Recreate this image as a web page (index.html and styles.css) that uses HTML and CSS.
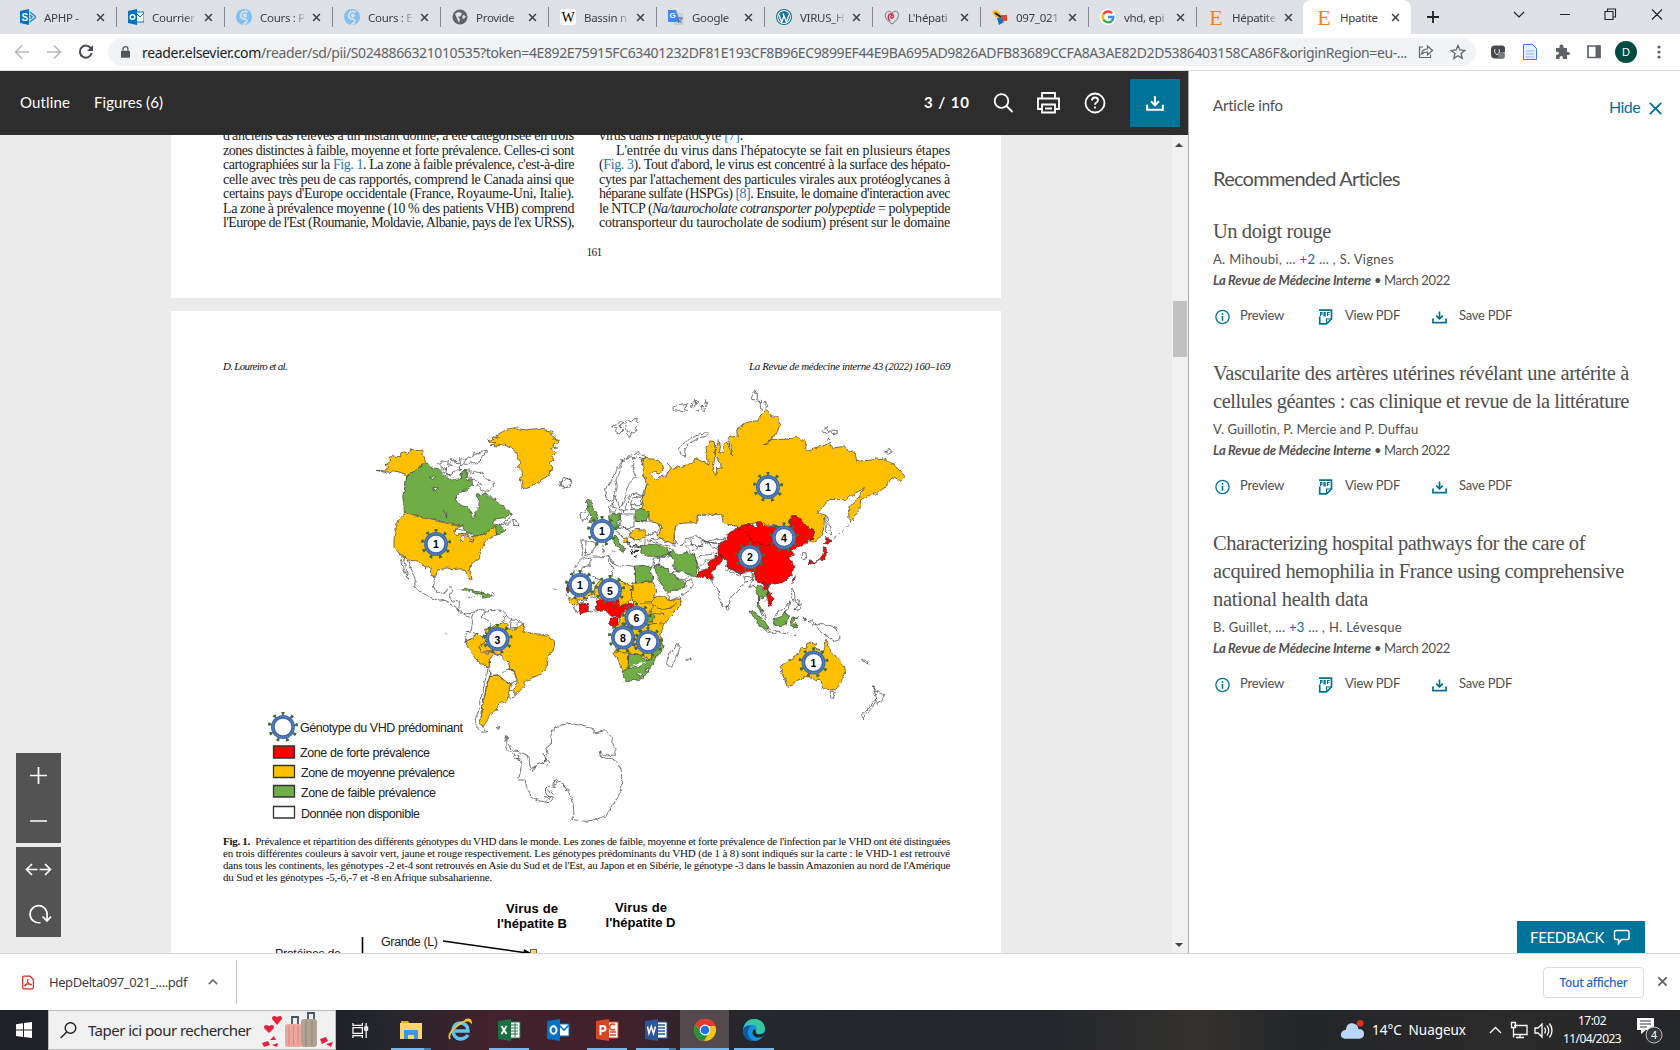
FILE: index.html
```html
<!DOCTYPE html>
<html lang="fr">
<head>
<meta charset="utf-8">
<title>Hpatite</title>
<link rel="stylesheet" href="styles.css">
</head>
<body>
<svg class="defs" aria-hidden="true">
  <defs>
    <filter id="coast" x="-5%" y="-5%" width="110%" height="110%" color-interpolation-filters="sRGB"><feTurbulence type="fractalNoise" baseFrequency=".07" numOctaves="2" seed="4" result="n"/><feDisplacementMap in="SourceGraphic" in2="n" scale="13" xChannelSelector="R" yChannelSelector="G"/></filter>
    <symbol id="i-x" viewBox="0 0 10 10"><path d="M1.2 1.2l7.6 7.6M8.8 1.2L1.2 8.8" fill="none" stroke="currentColor" stroke-width="1.7"/></symbol>
    <symbol id="i-moodle" viewBox="0 0 16 16"><circle cx="8" cy="8" r="8" fill="#7fc1f4"/><path d="M12 3Q6 1 5 5.500T9 10q3 1 1 3.500L7 16" fill="none" stroke="#dee1e6" stroke-width="1.800"/><circle cx="9" cy="6.500" r="2" fill="#dee1e6"/></symbol>
    <symbol id="i-down" viewBox="0 0 16 14"><path d="M8 1v8M4.500 5.500L8 9l3.500-3.500M1 8.500V13h14V8.500" fill="none" stroke="currentColor" stroke-width="1.800"/></symbol>
    <symbol id="i-info" viewBox="0 0 14 14"><circle cx="7" cy="7" r="6.200" fill="none" stroke="currentColor" stroke-width="1.200"/><path d="M7 6v4.500M7 3.300v1.500" stroke="currentColor" stroke-width="1.500"/></symbol>
    <symbol id="i-pdf" viewBox="0 0 14 16"><path d="M1.200 7.500v7.300H8l5-4.800V1.200H.5" fill="none" stroke="currentColor" stroke-width="1.700"/><path d="M8 14.500V10h5M2 7V3.500h1.500v1.700H2M5.500 3.500V7h1.200V3.500zM9 7V3.500h2.300M9 5.200h1.800" fill="none" stroke="currentColor" stroke-width="1.100"/></symbol>
    <symbol id="badge" viewBox="-48 -48 96 96" overflow="visible">
      <circle r="39" fill="none" stroke="#4d7a35" stroke-width="10" stroke-dasharray="6 21.230" transform="rotate(-94)"/>
      <circle r="42" fill="none" stroke="#3f6b2c" stroke-width="6" stroke-dasharray="9 20.320" transform="rotate(-96)"/>
      <circle r="30.500" fill="#fff" stroke="#3d68ac" stroke-width="11"/>
      <circle r="31" fill="none" stroke="#8aaede" stroke-width="3" stroke-dasharray="3 3.500"/>
    </symbol>
  </defs>
</svg>

<div class="tabs">
  <div class="tab"><svg viewBox="0 0 16 16"><path d="M0 2l9-2v16l-9-2z" fill="#0072c6"/><path d="M10 3l6 5-6 5M10 6l2 2-2 2" fill="none" stroke="#2a8dd4" stroke-width="1.500"/><text x="1.500" y="11.500" class="fav" fill="#fff" font-size="10">S</text></svg><span>APHP - </span><svg class="x"><use href="#i-x"/></svg></div>
  <div class="tab"><svg viewBox="0 0 16 16"><path d="M8 3h8v10H8z" fill="#fff" stroke="#0072c6"/><path d="M8 4l4 4 4-4" fill="none" stroke="#0072c6"/><path d="M0 2l9-2v16l-9-2z" fill="#0072c6"/><circle cx="4.500" cy="8" r="2.300" fill="none" stroke="#fff" stroke-width="1.500"/></svg><span>Courrier</span><svg class="x"><use href="#i-x"/></svg></div>
  <div class="tab"><svg><use href="#i-moodle"/></svg><span>Cours : P</span><svg class="x"><use href="#i-x"/></svg></div>
  <div class="tab"><svg><use href="#i-moodle"/></svg><span>Cours : E</span><svg class="x"><use href="#i-x"/></svg></div>
  <div class="tab"><svg viewBox="0 0 16 16"><circle cx="8" cy="8" r="7.500" fill="#5f6368"/><path d="M3 5l3-2 4 1-1 3-3 1 2 2-1 4M11 6l3 1-2 3-2-1z" fill="#dee1e6"/></svg><span>Provide</span><svg class="x"><use href="#i-x"/></svg></div>
  <div class="tab"><svg viewBox="0 0 16 16"><rect width="16" height="16" rx="3" fill="#fff"/><text x="8" y="13" text-anchor="middle" class="fav-serif" font-size="14">W</text></svg><span>Bassin n</span><svg class="x"><use href="#i-x"/></svg></div>
  <div class="tab"><svg viewBox="0 0 16 16"><rect x="6" y="4" width="9.500" height="12" rx="1" fill="#ccd0d6"/><path d="M0 1h8l4 12H1q-1 0-1-1z" fill="#4285f4"/><text x="1.500" y="9" class="fav" fill="#fff" font-size="8">G</text><path d="M9 9h6M12 8v2M14 9q-1 3-4 5M10 10q2 3 4 4" stroke="#607080" stroke-width=".9" fill="none"/></svg><span>Google</span><svg class="x"><use href="#i-x"/></svg></div>
  <div class="tab"><svg viewBox="0 0 16 16"><circle cx="8" cy="8" r="7.500" fill="#fff" stroke="#21759b" stroke-width="1.200"/><circle cx="8" cy="8" r="6" fill="#21759b"/><path d="M2.500 5l3.200 8L8 7l2.500 6 3-8.500M7 4.500l3.500 8.500" stroke="#fff" stroke-width="1.300" fill="none"/></svg><span>VIRUS_H</span><svg class="x"><use href="#i-x"/></svg></div>
  <div class="tab"><svg viewBox="0 0 16 16"><path d="M8 15C2 11 0 7 2 4s5-2 6 1c1-3 5-4 6-1s0 7-6 11z" fill="none" stroke="#777" stroke-width="1"/><path d="M6 12C3 9 4 5 7 5S10 8 8.500 9 6 8 8 6" fill="none" stroke="#e0224e" stroke-width="1.400"/></svg><span>L'hépati</span><svg class="x"><use href="#i-x"/></svg></div>
  <div class="tab"><svg viewBox="0 0 16 16"><path d="M0 3q3-3 6-1t3 5l-5 2z" fill="#f5b914"/><path d="M9 6h6v6h-5z" fill="#e5452d"/><path d="M5 9l4-1 3 5-5 3z" fill="#1675b8"/><path d="M3 4l6 4" stroke="#222" stroke-width="2"/></svg><span>097_021</span><svg class="x"><use href="#i-x"/></svg></div>
  <div class="tab"><svg viewBox="0 0 16 16"><circle cx="8" cy="8" r="8" fill="#fff"/><g fill="none" stroke-width="2.400"><path d="M12 4.200A5.300 5.300 0 0 0 3.400 5.300" stroke="#ea4335"/><path d="M3.400 5.300a5.300 5.300 0 0 0 0 5.400" stroke="#fbbc05"/><path d="M3.400 10.700a5.300 5.300 0 0 0 8.400 1.100" stroke="#34a853"/><path d="M11.800 11.800A5.300 5.300 0 0 0 13.300 8H8" stroke="#4285f4"/></g></svg><span>vhd, epi</span><svg class="x"><use href="#i-x"/></svg></div>
  <div class="tab"><svg viewBox="0 0 16 16"><text x="8" y="15.500" text-anchor="middle" class="fav-serif" font-size="22" fill="#f58220">E</text></svg><span>Hépatite</span><svg class="x"><use href="#i-x"/></svg></div>
  <div class="tab active"><svg viewBox="0 0 16 16"><text x="8" y="15.500" text-anchor="middle" class="fav-serif" font-size="22" fill="#f58220">E</text></svg><span>Hpatite</span><svg class="x"><use href="#i-x"/></svg></div>
  <svg class="winctl" viewBox="1417 0 263 34" fill="none" stroke="#222"><path d="M1427 17h12M1433 11v12" stroke-width="1.800"/><path d="M1514 12l5 5 5-5M1560 14.500h10M1605 11.500h8v8h-8zM1607.500 11.500v-2.500h8v8h-2.500M1652 9.500l10 10M1662 9.500l-10 10" stroke-width="1.100"/></svg>
</div>

<div class="toolbar">
  <svg class="nav" viewBox="0 34 108 36" fill="none" stroke-width="1.700"><path d="M29 52H16M22 45.500L15.500 52l6.500 6.500M47 52h13M54 45.500l6.500 6.500-6.500 6.500" stroke="#b8babd"/><path d="M91 48.500a6 6 0 1 0 .7 4.500" stroke="#4a4d51" stroke-width="2"/><path d="M93 45v6h-6z" fill="#4a4d51"/></svg>
  <div class="omni">
    <svg class="lock" viewBox="0 0 10 13"><rect y="5" width="10" height="8" rx="1" fill="#54575b"/><path d="M2.300 5V3.300a2.700 2.700 0 0 1 5.400 0V5" fill="none" stroke="#54575b" stroke-width="1.400"/></svg>
    <div class="url"><span class="host" data-w="119">reader.elsevier.com</span><span data-w="1146">/reader/sd/pii/S0248866321010535?token=4E892E75915FC63401232DF81E193CF8B96EC9899EF44E9BA695AD9826ADFB83689CCFA8A3AE82D2D5386403158CA86F&amp;originRegion=eu-...</span></div>
  </div>
  <svg class="ext" viewBox="1412 34 268 36" fill="none" stroke="#5f6368">
    <path d="M1423 47h-3.500v10.500h11v-3M1421.500 54q1-5 6-5v-3l5 4.500-5 4.500v-3q-4 0-6 2z" stroke-width="1.200"/>
    <path d="M1458 45.500l2 4.500 4.800.4-3.700 3.200 1.200 4.700-4.300-2.600-4.200 2.600 1.200-4.700-3.700-3.200 4.800-.4z" stroke-width="1.300"/>
    <path d="M1491 49q0-3.500 4-3.500h7q3 0 3 3v4h-4v6h-6q-4 0-4-4z" fill="#45484c" stroke="none"/><circle cx="1501.500" cy="55.500" r="3.500" fill="#777a7e" stroke="none"/><path d="M1495 49q-2 3 2 6M1499 49q2 3-2 6" stroke="#ddd"/>
    <path d="M1523.500 44.500h9l4 4v11h-13z" fill="#e4f0ff" stroke="#3b7ddd"/><path d="M1526 51h8M1526 54h8M1526 57h8" stroke="#8bb5ef"/>
    <path d="M1556 48h3.500q-.5-3.500 2-3.500t2 3.500h3.500v4q3-.5 3 1.500t-3 1.500v4h-4q0-3-1.800-3t-1.700 3H1556v-4q3 0 3-1.700t-3-1.600z" fill="#5f6368" stroke="none"/>
    <path d="M1588 46h12v11.500h-12z" stroke-width="1.700"/><path d="M1596 46h4v11.500h-4z" fill="#5f6368"/>
    <circle cx="1626" cy="52" r="11" fill="#004d40" stroke="none"/><text x="1626" y="56" text-anchor="middle" class="ava">D</text>
    <g fill="#5f6368" stroke="none"><circle cx="1659" cy="47" r="1.600"/><circle cx="1659" cy="52" r="1.600"/><circle cx="1659" cy="57" r="1.600"/></g>
  </svg>
</div>

<div class="content">
  <div class="reader">
    <header class="rhead">
      <span class="outline" data-w="50">Outline</span><span data-w="69">Figures (6)</span>
      <b class="count" data-w="46">3&nbsp;/&nbsp;10</b>
      <svg class="rico" viewBox="985 85 130 36" fill="none" stroke="#fff" stroke-width="1.800"><circle cx="1001.500" cy="101" r="6.800"/><path d="M1006.500 106l6 6"/><path d="M1042 98v-5h13v5M1041.500 109h-3.500V98.500h21V109h-3.500M1042 104.500h13v8h-13zM1045 108.500h7"/><circle cx="1095" cy="103" r="9.500"/><path d="M1092 100.500q0-3 3-3t3 2.700q0 1.500-1.500 2.300t-1.500 2.300M1095 106.500v2"/></svg>
      <div class="dl"><svg viewBox="0 0 16 14"><use href="#i-down"/></svg></div>
    </header>
    <div class="view">
      <div class="pages">
        <section class="page p1">
          <div class="cols">
            <div class="col">
              <p data-w="351">d'anciens cas relevés à un instant donné, a été catégorisée en trois</p>
              <p data-w="351">zones distinctes à faible, moyenne et forte prévalence. Celles-ci sont</p>
              <p data-w="351">cartographiées sur la <a>Fig. 1</a>. La zone à faible prévalence, c'est-à-dire</p>
              <p data-w="351">celle avec très peu de cas rapportés, comprend le Canada ainsi que</p>
              <p data-w="351">certains pays d'Europe occidentale (France, Royaume-Uni, Italie).</p>
              <p data-w="351">La zone à prévalence moyenne (10 % des patients VHB) comprend</p>
              <p data-w="351">l'Europe de l'Est (Roumanie, Moldavie, Albanie, pays de l'ex URSS),</p>
            </div>
            <div class="col">
              <p data-w="144">virus dans l'hépatocyte <a>[7]</a>.</p>
              <p class="ind" data-w="334">L'entrée du virus dans l'hépatocyte se fait en plusieurs étapes</p>
              <p data-w="351">(<a>Fig. 3</a>). Tout d'abord, le virus est concentré à la surface des hépato-</p>
              <p data-w="351">cytes par l'attachement des particules virales aux protéoglycanes à</p>
              <p data-w="351">héparane sulfate (HSPGs) <a>[8]</a>. Ensuite, le domaine d'interaction avec</p>
              <p data-w="351">le NTCP (<i>Na/taurocholate cotransporter polypeptide</i> = polypeptide</p>
              <p data-w="351">cotransporteur du taurocholate de sodium) présent sur le domaine</p>
            </div>
          </div>
          <div class="folio"><span data-w="15">161</span></div>
        </section>
        <section class="page p2">
          <div class="phead"><i data-w="64">D. Loureiro et al.</i><i data-w="201">La Revue de médecine interne 43 (2022) 160–169</i></div>
          <svg class="map" viewBox="171 380 830 455">
            <!-- Americas -->
            <g class="land" filter="url(#coast)" transform="translate(370 380) scale(.33333)">
              <path class="y" d="M18 271L50 273 56 260 48 254 66 240 56 232 72 228 92 230 92 218 104 216 116 222 122 206 136 212 158 210 160 226 167 248 110 290 104 282 88 276 70 272 58 280 40 276z"/>
              <path class="y" d="M110 290L112 308 118 330 110 346 104 330 108 310z"/>
              <path class="g" d="M110 290L167 248 178 258 190 264 206 266 222 284 232 290 244 300 272 296 270 282 288 268 290 298 306 300 308 316 290 330 276 332 262 342 256 360 272 374 292 382 304 400 306 412 316 410 314 394 326 380 328 362 318 346 348 340 364 356 378 358 390 372 404 382 424 402 400 414 372 418 368 432 384 434 408 450 388 464 372 458 376 444 356 460 318 468 285 452 274 436 103 400 102 376 98 350 106 320z"/>
              <path class="y" d="M103 400L188 421 274 438 256 450 262 460 286 462 296 470 320 468 350 460 364 446 376 442 380 462 360 474 344 486 338 502 328 520 330 532 304 552 298 566 307 598 298 598 286 572 270 566 248 570 232 564 206 570 196 590 184 586 178 560 162 562 148 544 112 540 88 520 72 502 72 476 78 442 90 412z"/>
              <path class="w" d="M250 456L266 448 288 452 292 460 276 460 260 464zM272 484Q270 466 282 466L280 484zM292 460Q310 462 306 476L298 472zM298 484L320 474 306 484zM178 292L198 290 188 298zM186 322L206 324 194 332zM224 392L230 400 230 414z"/>
              <path class="y" d="M350 182L372 178 366 170 385 174 378 166 398 155 410 147 440 143 465 150 500 146 528 150 552 155 540 162 556 170 548 176 568 180 560 190 548 196 560 204 545 208 556 218 546 228 552 240 540 248 552 270 538 272 540 285 520 296 500 308 485 320 462 328 455 318 458 304 448 295 458 288 455 268 440 262 452 250 442 236 440 215 425 205 400 195 385 198 360 196 378 190z"/>
              <path class="l" d="M565 312l10-10 6 6 6-12 14 2 6 14-8 8-14 4-12-8zM206 250l12-8 14 4-2 8 18 2-12-12 8-8 12 4 2 10 14 0-4-14 16 8 12-14 6 6 14-14 18-6 6-6 12 2-12 16-10 16-18 8-8-6-14 6-10-4-12 12 2 12-18 2-8 12-14-2 2-14-16-4-4-10zM290 270l10 0 0 12 14-8 16 4 12 8 14 14 14 8 0 14-10 10-14 2-16-8-10-10 14 0-6-10-20-10-16-4zM424 402L414 420 388 436 412 432 428 418 432 436 446 438 444 426 430 416M268 270l10-2-4 28M240 235l10 6M260 262l12 6M316 214l-8 12M212 268l30 20 8-14M222 278l18-20"/>
              <path class="l" d="M88 520L96 545 100 568 116 598 108 572 102 545 100 532 112 540 126 572 136 600 134 622 160 640 200 662 222 658 240 672 262 686 275 704 300 712M195 590L190 615 196 632 212 640 230 636 238 622 248 628 236 648 244 662 268 666 266 690 286 702 305 700M368 640l6 2M290 652l10 0M550 626l10 5M224 757l6 6"/>
              <path class="g" d="M272 630l16-6 16 6 12 4 16 2 6 6-22 0-8-8-16-2-14 2zM330 646l10-6 14 2 16 8-16 2-14 2zM304 652l10 0"/>
              <path class="w" d="M305 712L310 700 330 688 342 686 342 700 362 692 388 690 404 696 410 708 428 720 446 722 462 734 456 744 440 742 410 745 402 728 382 738 362 746 348 748 346 776 336 768 322 764 302 778 286 786 288 760 304 748 308 728zM335 700L334 714 350 718 362 728 366 748M404 708l-4 20M425 715l-4 26M445 722l-2 18M290 755l24 4 6 6"/>
              <path class="y" d="M284 786L302 780 318 764 326 762 336 774 350 772 346 788 332 796 334 812 350 820 368 812 372 826 358 838 360 850 354 862 332 850 314 834 304 812z"/>
              <path class="y" d="M348 748L362 746 382 736 402 728 412 734 410 745 428 748 446 742 458 732 466 745 460 758 472 752 484 760 506 762 530 768 552 778 554 792 550 808 536 826 530 845 528 865 515 882 495 890 480 898 466 905 464 918 450 932 436 946 424 940 438 918 442 900 436 885 430 872 418 864 415 848 398 832 380 820 365 815 334 816 328 798 346 786z"/>
              <path class="w" d="M358 838L374 820 396 830 416 848 420 868 434 876 438 900 422 914 410 906 396 894 382 884 360 888zM396 880L410 868 432 872M412 934L424 930 438 944 424 956 412 950z"/>
              <path class="y" d="M360 886L385 886 395 895 410 908 424 914 418 932 412 955 410 965 390 970 382 978 378 990 362 1000 355 1015 348 1030 340 1042 328 1032 334 1015 336 990 340 962 345 940 350 915z"/>
              <path class="w" d="M350 862L357 864 360 886 350 915 344 944 338 970 336 1000 332 1016 328 1036 340 1044 350 1056 336 1056 318 1036 316 1016 328 990 330 960 340 930 348 890zM378 1042l12-2-8 6zM404 1068l10 4-8 6"/>
            </g>
            <!-- Europe, Middle East and Africa -->
            <g class="land" filter="url(#coast)" transform="translate(560 380) scale(.33333)">
              <path class="l" d="M155 140l16-6 12-12 8 10-12 6 12 10-14 14-12-10 8-8zM195 140l6-20 14 6 6-8 16-6-6 14 8 8-14 10 4 10-14 2-4 14-10-8 8-10-10-2zM338 82l14-6 12 0 16-4-8 12 12 6-16 6-14-6-14 0zM390 80l10-12 8 2-8 14zM405 58l10 8-6 8zM422 78l12 4-6 12zM436 62l8 6-6 10zM412 88l4 6-8-2M358 208L368 192 388 178 418 162 444 158 444 166 418 174 390 188 376 204 374 214 378 228 364 226zM0 308l8-6 2-10 20 6 4 12-14 14-16-6z"/>
              <path class="w" d="M134 330L148 310 160 292 170 268 182 248 196 234 212 226 228 216 244 224 258 230 252 240 258 270 250 290 262 310 248 348 226 340 210 344 200 372 192 392 180 388 172 360 162 356 152 364 138 356zM180 242l14 2M175 270L192 236 214 230 222 236 216 260 228 290 208 310 194 340 200 350 182 380M222 236L242 232 254 260M162 356L172 320 168 300 182 272"/>
              <path class="w" d="M148 382l10-14 2 14 10 4-6 10-14 0zM182 402L196 390 216 388 212 364 232 348 246 350 244 370 248 386 236 390 262 392 268 424 296 432 302 450 282 456 276 466 264 462 256 476 254 494 236 500 210 496 196 480 176 460 160 440 180 432zM184 402L222 402 222 440 200 448 176 428M222 420L262 424M216 388L236 390M212 374l34 0M170 440l34 8 10 12M206 470l36 14M176 456l24 30 8 18M192 470l16 24"/>
              <path class="w" d="M62 482L96 484 110 492 100 508 98 520 78 526 66 528 68 508zM78 484l-2 40M60 402l16-10 8 6-2 18-18 8-2-12zM130 505l2 8-6 4M128 495l2 6M154 512l12 2"/>
              <path class="g" d="M78 362L92 356 96 372 98 384 108 398 114 412 110 424 96 424 86 428 96 414 88 398 82 386 84 374zM146 410L158 400 178 402 182 420 170 428 174 442 150 442zM224 398L236 386 262 384 268 404 258 422 226 422zM156 474L170 468 176 484 188 498 198 506 192 508 188 522 182 508 168 496zM96 430L130 418 152 434 158 474 110 482z"/>
              <path class="y" d="M212 460L226 448 248 450 258 460 254 474 232 480 212 472zM190 478l10-6 4 12-10 4z"/>
              <path class="k" d="M206 498L216 502 226 496 236 500M210 508L222 512 216 522 232 516 228 506M222 530L234 526 M224 516L238 510M212 516L218 526"/>
              <path class="g" d="M240 498L262 492 282 494 310 498 326 502 328 522 298 530 260 528 244 520zM325 520L340 514 356 522 384 516 404 526 412 550 410 572 414 590 392 588 370 576 350 572 336 550zM226 558L248 556 276 560 270 572 278 590 276 606 226 608zM284 558L300 556 322 568 340 578 350 596 364 602 378 612 370 624 342 630 328 640 312 626 298 602 288 578z"/>
              <path class="w" d="M40 580L46 560 66 538 88 532 128 530 152 526 158 552 182 560 204 556 226 560 226 612 212 620 176 600 152 606 120 600 94 586 62 584zM62 578L66 562 92 556 94 536M150 530L148 552 158 564 156 604M20 630l20 0 10 16-14 14-18-12zM38 672L56 666 60 688 48 698zM70 668L88 650 104 652 110 668 104 690 86 696 76 670z"/>
              <path class="w" d="M278 556L284 534 306 530 334 528 344 550 336 556 350 574 336 580 318 566 298 556zM300 530L296 556M320 640L374 622 378 602 396 600 400 614 388 632 356 652 330 662zM352 596L378 600 386 588M380 502L374 496 400 494 424 500 432 484 476 490 476 512 466 530 480 536 452 556 440 570 416 574 412 548 404 526zM340 460L346 430 388 426 412 424 412 406 440 406 456 400 486 402 506 430 538 440 504 460 500 480 470 492 440 486 408 468 382 476 370 492 354 494 346 480zM388 474L396 496 430 500M440 486l30-10 28 0M264 482L296 492 326 498 340 510M310 488l20-6 14 18M286 456L304 470 290 480 270 478"/>
              <path class="r" d="M24 612l14-6 0 24-16 0zM58 672l28-2-2 24-24 8zM108 668L122 656 150 664 178 658 178 676 206 672 222 668 222 680 204 688 186 698 180 712 160 710 146 698 128 692 108 696zM150 714L174 714 174 732 162 744 148 730z"/>
              <path class="y" d="M52 600L96 622 102 642 84 652 70 662 48 658 70 620zM120 602L180 602 214 618 216 654 206 668 178 678 176 656 116 654 104 646 104 620zM26 654l20 0 12 16-16 8-14-14zM218 610L278 606 290 630 280 650 292 650 308 648 330 662 362 656 362 676 338 700 316 726 306 748 300 780 306 800 290 818 268 840 240 824 204 818 208 870 190 876 180 850 162 820 170 790 162 762 158 742 178 730 182 706 206 688 222 680 220 660 214 650z"/>
              <path class="l" d="M214 618L218 652M286 646L276 670 292 684 318 690 350 672M280 672L270 700 280 730 316 732M180 742L278 732M204 780l20 20 14-20M164 816L230 822M216 654L232 670 278 668M278 700l38 4"/>
              <path class="g" d="M262 708l14-6 8 10-6 12-14 4zM186 876L204 864 206 824 236 822 250 834 266 844 280 820 276 800 300 796 306 782 312 798 306 816 286 830 282 850 272 858 262 880 246 896 218 902 196 906zM204 862L238 860 264 842"/>
              <path class="w" d="M234 882l10-6 4 8-10 6zM256 868l6-4 2 8-6 4zM320 850L326 820 342 808 354 790 360 806 348 834 336 858 324 858z"/>
              <path class="l" d="M378 838l6 2M388 836l6 2"/>
            </g>
            <!-- Russia, Asia and Oceania -->
            <g class="land" filter="url(#coast)" transform="translate(680 380) scale(.33333)">
              <path class="y" d="M-114 232L-95 236 -75 238 -52 252 -48 270 -60 282 -80 275 -92 282 -70 300 -62 290 -42 288 -30 268 -38 250 -22 268 -8 262 18 255 40 248 44 235 58 240 80 248 86 256 78 205 90 182 102 185 106 210 102 250 96 268 108 286 110 262 130 264 116 246 104 214 115 182 122 200 118 214 134 218 130 196 140 186 150 205 158 228 154 204 144 184 146 172 172 168 170 150 196 130 212 124 238 122 240 108 256 92 268 104 294 112 300 135 288 164 252 196 276 178 320 178 352 172 376 184 378 206 394 214 398 204 430 198 446 188 460 204 488 200 526 220 530 244 576 240 582 234 606 236 640 252 674 288 662 302 634 294 620 318 592 340 562 348 542 360 540 388 508 430 505 385 530 358 550 326 524 340 500 360 450 358 410 398 434 405 432 440 424 466 402 486 388 486 404 456 368 436 350 408 330 420 328 440 300 440 268 436 240 425 180 440 130 430 125 405 80 402 52 406 50 428 0 430 -14 440 -18 470 -14 492 -40 485 -66 470 -54 438 -90 420 -94 395 -114 385 -112 350 -98 310 -106 290 -110 270z"/>
              <path class="r" d="M115 500L130 484 142 480 144 460 166 450 180 436 208 434 230 440 230 422 242 422 250 434 276 440 326 440 330 426 334 410 350 408 368 424 372 438 404 450 398 476 374 490 348 506 330 514 346 524 326 532 342 556 336 586 308 608 270 614 244 610 226 600 224 574 180 578 140 566 130 540 114 524z"/>
              <path class="r" d="M50 592L56 576 80 568 90 545 105 530 125 526 128 538 108 560 94 580 100 598 86 598 76 588zM245 610L268 615 262 632 282 655 278 670 262 678 268 660 256 636zM384 554L388 542 404 546 420 536 430 518 430 500 440 504 438 526 428 542 414 540 404 548zM430 490L440 484 440 472 456 484 444 492zM334 606l4-12 8-4-4 14-6 4z"/>
              <path class="l red" d="M172 442L200 460 222 488 262 496 310 486 332 462"/>
              <path class="w" d="M126 530L142 542 140 560 180 580 216 578 222 590 210 604 194 606 184 620 164 640 150 656 144 680 132 682 118 654 112 620 96 612 92 602 102 596 96 580 108 560 128 540zM140 572l8-6 34 16-4 6zM140 676l8 8-4 8-6-4zM196 606L194 590 216 590"/>
              <path class="l" d="M216 580L218 604 206 622 222 616 232 640 234 676M262 616L254 630 262 656 254 666"/>
              <path class="g" d="M226 628l6-12 8 0 6 10 16 2 4 14-14 4-4 10-12-4 0 20 6 12 10 14-6 0-14-18 2-26zM210 692l14 4 16 14 14 14 12 20-10 4-16-10-20-24zM282 716l18-4 10-10 8-8 8 16-8 12-2 14-12 4-20-4zM330 724l6-12 20-2-16 8 6 4-8 6 8 10-4 8-8-10zM370 710l6 4-4 10zM344 730l10 10-6 4z"/>
              <path class="l" d="M262 746l20 4 20 6-18 4-24-8zM304 758l18 4M328 766l20 0M240 692l14 10 6 14-14-10zM284 712l14-20 14-4 18-26-6 26-12 12M335 640l0-12 8 4 2 20-6 10-4-10zM346 658l12 4-2 14-10-8zM350 678l14-8 0 18-8 4-14-4zM384 724L398 722 406 736 424 730 470 742 480 770 476 780 464 784 440 768 424 758 410 740zM405 735l-12 4M364 518l14 0 2 16-8 6-8-6zM214 50l10-20 8 14 0 14 10 6-2 6-14-8-10 0zM240 70l14-6 10 14-8 12-14-4zM426 152l16-10 8 12-14 10zM452 150l20 2 0 8-16 4zM440 184l6-10 6 8M614 216l14-8 10 4-14 8zM438 402l6 14 6 30 2 20-12-6-2-30zM460 478l8-8M474 464l6-4M486 456l4-4M498 442l6-6M36 512l18-6 14-26 30 24 22-4M52 536l10-10 24-2 20-4M60 560l20-20 30 0"/>
              <path class="y" d="M300 860L318 846 338 838 346 824 358 818 364 804 378 806 380 792 390 786 410 790 406 804 428 818 434 806 438 778 444 788 450 812 462 824 476 838 490 856 494 876 484 904 474 924 454 930 430 926 424 908 414 896 408 904 396 892 376 890 354 900 338 914 322 922 314 898z"/>
              <path class="l" d="M450 934l16 0-6 22-8-6zM548 838l10 4 10 10-12-4zM580 920L590 936 614 944 606 962 592 970 588 950zM590 960L576 982 558 1000 548 1016 544 1004 566 986 582 964zM16 838l8 0M30 836l4 0"/>
            </g>
            <!-- Antarctica -->
            <g class="land" filter="url(#coast)" transform="translate(260 690) scale(.33333)">
              <path class="l" d="M735 152L742 136 740 160 755 180 775 185 790 190 800 195 808 215 812 235 835 225 855 215 862 195 858 175 875 160 872 135 885 112 905 105 930 100 975 110 1005 118 1000 130 1035 122 1058 140 1055 155 1065 180 1065 195 1035 198 1020 185 1025 205 1055 205 1075 220 1085 245 1085 290 1075 320 1055 350 1040 375 1010 388 975 394 935 388 942 370 938 330 925 305 905 280 885 270 880 290 865 290 855 300 865 320 880 325 868 338 835 332 812 318 800 290 795 270 775 270 782 240 785 215 765 205 758 190 740 178z"/>
              <path class="l" d="M760 190l18 8-8 12 14 0M762 204l14 6M810 240l18-10-10 16M855 205l14 14-6 8M850 190l10 20-14 10M880 270l12 10-16 10 12 4M852 320l20 4-10 10M860 290l20 24M1018 184l4 20M905 280l24 20-14 2"/>
            </g>
            <g stroke="#333" stroke-width="1.300"><path class="r" d="M273.500 746h21v12h-21z"/><path class="y" d="M273.500 765.500h21v12h-21z"/><path class="g" d="M273.500 785.500h21v11.500h-21z"/><path class="w" d="M273.500 806.500h21V818h-21z"/></g>
            <use href="#badge" x="267" y="711" width="32" height="32"/>
            <g class="leg"><text x="300" y="732" textLength="163">Génotype du VHD prédominant</text><text x="300" y="757" textLength="130">Zone de forte prévalence</text><text x="301" y="777" textLength="154">Zone de moyenne prévalence</text><text x="301" y="796.500" textLength="135">Zone de faible prévalence</text><text x="301" y="817.500" textLength="119">Donnée non disponible</text></g>
            <g class="num">
              <use href="#badge" x="420" y="528" width="32" height="32"/><text x="436" y="548">1</text>
              <use href="#badge" x="481.500" y="623" width="32" height="32"/><text x="497.500" y="643.500">3</text>
              <use href="#badge" x="586" y="515" width="32" height="32"/><text x="602" y="535">1</text>
              <use href="#badge" x="564" y="569" width="32" height="32"/><text x="580" y="589">1</text>
              <use href="#badge" x="594" y="574" width="32" height="32"/><text x="610" y="594.500">5</text>
              <use href="#badge" x="620.500" y="602" width="32" height="32"/><text x="636.500" y="622">6</text>
              <use href="#badge" x="607" y="621.500" width="32" height="32"/><text x="623" y="642">8</text>
              <use href="#badge" x="632" y="626" width="32" height="32"/><text x="648" y="646">7</text>
              <use href="#badge" x="752" y="471" width="32" height="32"/><text x="768" y="491">1</text>
              <use href="#badge" x="768" y="521.500" width="32" height="32"/><text x="784" y="542">4</text>
              <use href="#badge" x="734" y="541" width="32" height="32"/><text x="750" y="561">2</text>
              <use href="#badge" x="797.500" y="646.500" width="32" height="32"/><text x="813.500" y="666.500">1</text>
            </g>
          </svg>
          <div class="cap">
            <p data-w="727"><b>Fig. 1.</b>&ensp;Prévalence et répartition des différents génotypes du VHD dans le monde. Les zones de faible, moyenne et forte prévalence de l'infection par le VHD ont été distinguées</p>
            <p data-w="727">en trois différentes couleurs à savoir vert, jaune et rouge respectivement. Les génotypes prédominants du VHD (de 1 à 8) sont indiqués sur la carte : le VHD-1 est retrouvé</p>
            <p data-w="727">dans tous les continents, les génotypes -2 et-4 sont retrouvés en Asie du Sud et de l'Est, au Japon et en Sibérie, le génotype -3 dans le bassin Amazonien au nord de l'Amérique</p>
            <p data-w="269">du Sud et les génotypes -5,-6,-7 et -8 en Afrique subsaharienne.</p>
          </div>
          <svg class="fig2" viewBox="171 895 830 70">
            <g class="fh"><text x="506" y="912.500" textLength="52">Virus de</text><text x="497" y="927.500" textLength="70">l'hépatite B</text><text x="615" y="912" textLength="52">Virus de</text><text x="605.500" y="927" textLength="70">l'hépatite D</text></g>
            <g class="fl"><text x="381" y="945.500" textLength="57">Grande (L)</text><text x="275" y="957.500" textLength="66">Protéines de</text></g>
            <path d="M362.500 937v28M443 941l88 12.500" stroke="#000" stroke-width="1.600"/><path d="M524 949l8 4.500-9 2z"/><rect x="530.500" y="949.500" width="6" height="20" fill="#ffd54a" stroke="#666"/>
          </svg>
        </section>
      </div>
      <div class="scroll"><span class="thumb"></span></div>
      <div class="zoom">
        <div class="zbox"><svg viewBox="0 0 45 90" stroke="#fff" stroke-width="1.700"><path d="M14 22.500h17M22.500 14v17M14 68h17"/></svg></div>
        <div class="zbox"><svg viewBox="0 0 45 90" stroke="#fff" stroke-width="1.700" fill="none"><path d="M11 22.500h10.500M23.500 22.500h10.500M16 17l-5.500 5.500 5.500 5.500M29 17l5.500 5.500-5.500 5.500M24.500 75.500a8.500 8.500 0 1 1 6.500-7v5M26.500 69.500l4.500 4.500 4-4.500"/></svg></div>
      </div>
    </div>
  </div>
  <aside class="side">
    <div class="shead"><span data-w="70">Article info</span><div class="hide"><span data-w="31">Hide</span><svg viewBox="0 0 13 13"><path d="M.8.8l11.400 11.400M12.200.8L.8 12.200" stroke="#007398" stroke-width="1.800"/></svg></div></div>
    <h2><span data-w="187">Recommended Articles</span></h2>
    <article>
      <h3><span data-w="118">Un doigt rouge</span></h3>
      <div class="auth"><span data-w="181">A. Mihoubi, ... <a>+2</a> ... , S. Vignes</span></div>
      <div class="jour"><i data-w="158">La Revue de Médecine Interne</i><span data-w="76">• March 2022</span></div>
      <div class="acts"><svg><use href="#i-info"/></svg><span data-w="44">Preview</span><svg><use href="#i-pdf"/></svg><span data-w="55">View PDF</span><svg><use href="#i-down"/></svg><span data-w="53">Save PDF</span></div>
    </article>
    <article>
      <h3><span data-w="416">Vascularite des artères utérines révélant une artérite à</span><span data-w="416">cellules géantes : cas clinique et revue de la littérature</span></h3>
      <div class="auth"><span data-w="205">V. Guillotin, P. Mercie and P. Duffau</span></div>
      <div class="jour"><i data-w="158">La Revue de Médecine Interne</i><span data-w="76">• March 2022</span></div>
      <div class="acts"><svg><use href="#i-info"/></svg><span data-w="44">Preview</span><svg><use href="#i-pdf"/></svg><span data-w="55">View PDF</span><svg><use href="#i-down"/></svg><span data-w="53">Save PDF</span></div>
    </article>
    <article>
      <h3><span data-w="372">Characterizing hospital pathways for the care of</span><span data-w="411">acquired hemophilia in France using comprehensive</span><span data-w="155">national health data</span></h3>
      <div class="auth"><span data-w="189">B. Guillet, ... <a>+3</a> ... , H. Lévesque</span></div>
      <div class="jour"><i data-w="158">La Revue de Médecine Interne</i><span data-w="76">• March 2022</span></div>
      <div class="acts"><svg><use href="#i-info"/></svg><span data-w="44">Preview</span><svg><use href="#i-pdf"/></svg><span data-w="55">View PDF</span><svg><use href="#i-down"/></svg><span data-w="53">Save PDF</span></div>
    </article>
    <div class="feedback"><span data-w="74">FEEDBACK</span><svg viewBox="0 0 17 17"><path d="M3 1.500h11.500q1.500 0 1.500 1.500v6q0 1.500-1.500 1.500H8.500l-3 4v-4H3Q1.500 10.500 1.500 9V3Q1.500 1.500 3 1.500z" fill="none" stroke="#fff" stroke-width="1.500"/></svg></div>
  </aside>
</div>

<div class="shelf">
  <svg class="pdf" viewBox="0 0 13 15"><path d="M2 .7h6.500l3.800 3.500V13q0 1.300-1.300 1.300H2Q.7 14.300.7 13V2Q.7.700 2 .7z" fill="#fff" stroke="#e2231a" stroke-width="1.300"/><path d="M6.500 4q-1 0 0 3t3.500 3q1-1-3-.8T3 11q.5 1 2-1.500T6.500 4z" fill="none" stroke="#e2231a" stroke-width="1.100"/></svg>
  <span class="fname" data-w="138">HepDelta097_021_....pdf</span>
  <svg class="chev" viewBox="0 0 10 6"><path d="M.8 5.200L5 1l4.200 4.200" fill="none" stroke="#6b6e72" stroke-width="1.700"/></svg>
  <span class="bar"></span>
  <button class="all"><span data-w="68">Tout afficher</span></button>
  <svg class="sx"><use href="#i-x"/></svg>
</div>

<div class="task">
  <div class="start"><svg viewBox="0 0 16 16" fill="#fff"><path d="M0 2.200L7 1.200V7.600H0zM8 1L16 0V7.600H8zM0 8.500H7V14.900L0 13.900zM8 8.500H16V16L8 15z"/></svg></div>
  <div class="find">
    <svg class="mag" viewBox="0 0 17 17" fill="none" stroke="#222" stroke-width="1.400"><circle cx="10.500" cy="6" r="5.300"/><path d="M6.800 9.800L.8 16"/></svg>
    <span data-w="163">Taper ici pour rechercher</span>
    <svg class="bags" viewBox="0 0 76 38"><path d="M32 14V6h6v8M48 9V2h6v7" fill="none" stroke="#46505a" stroke-width="1.800"/><rect x="25" y="13" width="17" height="23" rx="3" fill="#eba69d"/><path d="M29 15v19M33.500 15v19M38 15v19" stroke="#d88a83"/><rect x="41" y="8" width="16" height="28" rx="3" fill="#b0a393"/><path d="M46 10v24M52 10v24" stroke="#8f8373"/><g fill="#e8213c"><path d="M17 14l-5-6q0-5 5-2 5-3 5 2zM9 22l-5-5q0-5 5-2 5-3 5 2z"/><path d="M2 32l6-2 2 4-6 2zM12 34l6-2-1 4zM60 28l6-2 2 4-6 3zM66 33l7-2-2 5zM10 29l4-4 2 4z"/></g></svg>
  </div>
  <div class="apps">
    <div class="tv"><svg viewBox="0 0 18 18" fill="none" stroke="#fff" stroke-width="1.300"><path d="M1 1v2.500h10V1M1 17v-2.500h10V17M1 6h10v6H1zM15 1v16M13.500 5.500h3v3h-3z"/></svg></div>
    <div class="app on dim"><svg viewBox="0 0 24 24"><path d="M2 3h7l2 3H2z" fill="#e8a317"/><path d="M1 5h22v16H1z" fill="#ffd769"/><path d="M5 12h14v9h-4v-4H9v4H5z" fill="#3b97e3"/></svg></div>
    <div class="app"><svg viewBox="0 0 24 24"><path d="M20 17q-3 4-8 4-7-1-7-9 1-7 8-7 7 1 7 8H7" fill="none" stroke="#5cc5f3" stroke-width="3.400"/><path d="M2 21q-3-5 7-13T23 4q0-4-6-2" fill="none" stroke="#f7c62f" stroke-width="1.800"/></svg></div>
    <div class="app on"><svg viewBox="0 0 24 24"><path d="M12 4h11v16H12z" fill="#fff" stroke="#217346"/><path d="M14 7h7M14 10h7M14 13h7M14 16h7M18 5v14" stroke="#217346"/><path d="M1 3l13-2v22L1 21z" fill="#1d7044"/><path d="M4.500 8l5 8M9.500 8l-5 8" stroke="#fff" stroke-width="1.800"/></svg></div>
    <div class="app"><svg viewBox="0 0 24 24"><path d="M12 6h11v12H12z" fill="#fff" stroke="#0072c6"/><path d="M13 7l5 5 5-5" fill="none" stroke="#0072c6" stroke-width="1.600"/><path d="M1 3l13-2v22L1 21z" fill="#0072c6"/><ellipse cx="7.500" cy="12" rx="3" ry="3.800" fill="none" stroke="#fff" stroke-width="2"/></svg></div>
    <div class="app on"><svg viewBox="0 0 24 24"><path d="M12 4h11v16H12z" fill="#fff" stroke="#d24726"/><path d="M15 14h6M15 17h6M20 7a3 3 0 1 0 0 4" stroke="#d24726" stroke-width="1.500" fill="none"/><path d="M1 3l13-2v22L1 21z" fill="#d24726"/><path d="M5.500 17V8H8q2.500.3 2.500 2.500T8 13H5.500" fill="none" stroke="#fff" stroke-width="2"/></svg></div>
    <div class="app on dim"><svg viewBox="0 0 24 24"><path d="M12 4h11v16H12z" fill="#fff" stroke="#2b579a"/><path d="M14 7h7M14 10h7M14 13h7M14 16h7" stroke="#2b579a" stroke-width="1.500"/><path d="M1 3l13-2v22L1 21z" fill="#2b579a"/><path d="M3.500 8.500l1.500 7 2.300-7 2.200 7 2-7" fill="none" stroke="#fff" stroke-width="1.500"/></svg></div>
    <div class="app on cur"><svg viewBox="0 0 24 24"><circle cx="12" cy="12" r="11" fill="#fbc116"/><path d="M2.500 6.500A11 11 0 0 1 22.500 8H12l-4.500 6z" fill="#e33b2e"/><path d="M2.500 6.500A11 11 0 0 0 11 23l5-8.500-8.500-1z" fill="#229342"/><circle cx="12" cy="12" r="5.400" fill="#fff"/><circle cx="12" cy="12" r="4.300" fill="#1a73e8"/></svg></div>
    <div class="app on"><svg viewBox="0 0 24 24"><circle cx="12" cy="12" r="11" fill="#1590df"/><path d="M1.500 10Q4 1 13 1q9 1 10 9 0 5-5 6-5 0-4-3 2-5-3-6-6-1-9.500 3z" fill="#38c6a0"/><path d="M1 12q2-5 8-4-4 3-3 8 1 5 6 7Q1 23 1 12z" fill="#0c59a4"/><path d="M14 13q-1 4 6 3l3-2-2 4q-5 3-9 0-3-3 0-7z" fill="#24262b"/></svg></div>
  </div>
  <div class="tray">
    <svg class="wx" viewBox="0 0 26 22"><circle cx="21" cy="4" r="3.400" fill="#e0301e"/><path d="M5 20q-5-1-4-5t5-4Q7 3 13 4q6 1 6 6 6 0 6 5t-5 5z" fill="#bcd6f7"/></svg>
    <span data-w="94">14°C&nbsp; Nuageux</span>
    <svg class="tri" viewBox="1488 1018 70 24" fill="none" stroke="#fff" stroke-width="1.300"><path d="M1491 1033l5.500-5.500 5.500 5.500M1515 1025.500h13v9h-13M1521 1034.500v3M1517 1037.500h8M1512.500 1022.500h4v5h-4zM1514.500 1027.500v10M1536 1028h3l4-4v13l-4-4h-3zM1545.500 1027.500q2 3 0 6M1548 1025.500q3.500 5 0 10M1550.500 1023.500q5 7 0 14"/></svg>
    <div class="clock"><span data-w="28">17:02</span><span data-w="58">11/04/2023</span></div>
    <svg class="note" viewBox="0 0 30 30"><path d="M1 3h17v12H10l-5 4v-4H1z" fill="#fff"/><path d="M4 6h11M4 9h11M4 12h7" stroke="#333" stroke-width="1.200"/><circle cx="18" cy="20" r="8" fill="#35373b" stroke="#bbb"/><text x="18" y="24" text-anchor="middle" class="ava">4</text></svg>
  </div>
</div>
<script src="fit.js"></script>
</body>
</html>
```

FILE: styles.css
```css
:root { --high: #fe0000; --mid: #ffc000; --low: #70ad47; --teal: #007398; --ui: "Noto Sans", "Open Sans", sans-serif; --serif: "Liberation Serif", serif; }
* { box-sizing: border-box; margin: 0; padding: 0; }
body { width: 1680px; height: 1050px; overflow: hidden; display: flex; flex-direction: column; font-family: var(--ui); font-size: 12px; color: #3c4043; background: #fff; }
svg { display: block; flex: none; }
.defs { position: absolute; width: 0; height: 0; }
[data-w] { display: inline-block; white-space: nowrap; flex: none; }
p[data-w] { display: table; }

.tabs { height: 34px; background: #dee1e6; display: flex; padding-left: 9px; }
.tab { width: 108px; height: 34px; display: flex; align-items: center; padding: 0 0 0 11px; flex: none; }
.tab:not(.active)::after { content: ""; width: 1px; height: 20px; background: #85888d; margin-left: auto; }
.tab > svg { width: 16px; height: 16px; }
.tab > span { width: 44px; margin-left: 8px; white-space: nowrap; font-size: 11.500px; letter-spacing: -.3px; mask-image: linear-gradient(90deg, #000 75%, rgba(0,0,0,.15)); }
.tab > svg.x { width: 9px; height: 9px; margin-left: 8px; color: #3c4043; }
.tab.active { background: #fff; border-radius: 8px 8px 0 0; margin-left: -2px; padding-left: 13px; width: 108px; margin-right: 6px; }
.tab.active > span { mask-image: none; width: 43px; }
.fav { font-family: "Liberation Sans", sans-serif; font-weight: 700; }
.fav-serif { font-family: var(--serif); }
.winctl { width: 263px; height: 34px; }
.ava { font: 11px "Liberation Sans", sans-serif; fill: #fff; stroke: none; }

.toolbar { height: 37px; display: flex; border-bottom: 1px solid #dadce0; }
.nav { width: 108px; height: 36px; }
.omni { width: 1368px; height: 28px; margin-top: 4px; border-radius: 14px; background: #f1f3f4; display: flex; align-items: center; padding-left: 13px; flex: none; }
.lock { width: 9px; height: 12px; margin-right: 12px; }
.url { font-size: 14px; color: #5f6368; display: flex; }
.host { color: #202124; }
.ext { width: 268px; height: 36px; margin-left: -64px; }

.content { height: 883px; display: flex; border-bottom: 1px solid #d5d7da; flex: none; }
.reader { width: 1188px; flex: none; }
.rhead { height: 64px; background: #2d2d2d; color: #fff; display: flex; align-items: center; padding: 0 0 2px 20px; font-family: Lato, sans-serif; font-size: 15px; }
.rhead .outline { margin-right: 24px; }
.rhead > span { margin-bottom: 1px; }
.count { margin-left: auto; margin-right: 15px; }
.rico { width: 130px; height: 36px; margin: 2px 15px 0 0; }
.dl { width: 50px; height: 48px; margin: 2px 8px 0 0; background: var(--teal); display: grid; place-items: center; }
.dl svg { width: 18px; height: 16px; }
.view { height: 818px; background: #ebebeb; overflow: hidden; display: flex; position: relative; }
.pages { width: 1172px; padding-left: 171px; }
.page { width: 830px; background: #fff; overflow: hidden; }
.p1 { height: 163px; margin-bottom: 13px; color: #1b1b1b; }
.cols { display: flex; gap: 25px; margin: -6px 51px 0 52px; }
.col { width: 351px; font: 14px/14.550px var(--serif); }
.col a { color: #2b74ab; }
.ind { margin-left: 17px; }
.folio { display: flex; justify-content: center; font: 11.500px/14px var(--serif); margin-top: 14px; padding-left: 16px; }
.p2 { height: 700px; padding-top: 48px; color: #111; }
.phead { display: flex; justify-content: space-between; padding: 0 51px 0 52px; font: 11px/15px var(--serif); height: 21px; }
.map { width: 830px; height: 455px; }
.land path { stroke: #333; stroke-width: 2; stroke-linejoin: round; }
.y { fill: var(--mid); } .r { fill: var(--high); } .g { fill: var(--low); } .w { fill: #fff; }
.land .l { fill: none; stroke: #444; stroke-width: 2.200; }
.land .red { stroke: #700; }
.land .k { fill: none; stroke: #111; stroke-width: 3; }
.leg { font: 12.500px "Liberation Sans", sans-serif; fill: #222; }
.num { font: bold 10.500px "Liberation Sans", sans-serif; text-anchor: middle; fill: #000; }
.cap { font: 11px/12.100px var(--serif); padding-left: 52px; height: 60px; }
.fig2 { width: 830px; height: 70px; }
.fh { font: bold 13px "Liberation Sans", sans-serif; }
.fl { font: 12.500px "Liberation Sans", sans-serif; fill: #222; }
.scroll { width: 16px; background: #f1f1f1; display: flex; justify-content: center; position: relative; }
.scroll::before, .scroll::after { content: ""; position: absolute; left: 3px; border: 4px solid transparent; }
.scroll::before { top: 4px; border-bottom-color: #444; }
.scroll::after { bottom: 2px; border-top-color: #444; }
.thumb { width: 14px; height: 56px; background: #c1c1c1; margin: 166px 1px 0 0; }
.zoom { position: absolute; left: 16px; top: 618px; display: grid; gap: 4px; }
.zbox { width: 45px; height: 90px; background: #535353; }

.side { width: 492px; border-left: 1px solid #aaa; padding-left: 24px; font-family: Lato, sans-serif; color: #505050; position: relative; }
.shead { display: flex; height: 72px; padding-top: 24px; font-size: 15px; line-height: 20px; justify-content: space-between; }
.hide { display: flex; gap: 9px; padding-right: 18px; margin-top: 2px; font-size: 16px; color: var(--teal); }
.hide svg { width: 13px; height: 13px; margin-top: 5px; }
h2 { font-size: 20px; font-weight: 400; line-height: 28px; height: 74px; padding-top: 21px; }
article { margin-bottom: 29px; }
h3 { font: 400 20.500px/28px var(--serif); display: flex; flex-direction: column; align-items: flex-start; }
.auth, .jour { height: 24px; line-height: 28px; font-size: 13px; }
.jour { height: 21px; line-height: 22px; display: flex; gap: 3px; }
.jour i { font-weight: 700; }
.auth a { color: var(--teal); }
.acts { display: flex; align-items: center; height: 28px; margin-top: 12px; padding-left: 2px; font-size: 13px; color: var(--teal); }
.acts svg { width: 15px; height: 16px; margin-top: 1px; }
.acts span { color: #505050; margin: -2px 34px 0 10px; }
.acts svg:nth-of-type(n+2) + span { margin-left: 12px; margin-right: 32px; }
.feedback { position: absolute; left: 328px; top: 850px; width: 128px; height: 32px; background: var(--teal); color: #fff; display: flex; align-items: center; gap: 9px; padding-left: 13px; font-size: 15px; }
.feedback svg { width: 17px; height: 17px; }

.shelf { height: 56px; display: flex; align-items: center; padding-left: 22px; flex: none; }
.pdf { width: 12px; height: 15px; margin-right: 15px; }
.fname { font-size: 13px; }
.chev { width: 10px; height: 6px; margin-left: 21px; }
.bar { width: 1px; height: 44px; background: #c5c7ca; margin-left: 18px; }
.all { margin-left: auto; width: 101px; height: 31px; border: 1px solid #dadce0; border-radius: 4px; background: #fff; color: #1a67d2; font: 500 12px var(--ui); }
.sx { width: 11px; height: 11px; margin: -2px 12px 0 13px; color: #5f6368; }

.task { height: 40px; display: flex; background: linear-gradient(90deg, #1f2126 0 336px, #24262b 380px, #42222c 490px, #40212c 620px, #26272c 740px, #24262b 1050px, #34322f 1200px, #232529 1300px, #2c2b2b 1500px, #25262a); color: #fff; flex: none; }
.start { width: 48px; display: grid; place-items: center; }
.start svg { width: 16px; height: 16px; }
.find { width: 288px; background: #f1f1f1; border: 1px solid #bbb; display: flex; align-items: center; padding-left: 11px; color: #2b2b2b; font-size: 15px; }
.mag { width: 17px; height: 17px; margin-right: 11px; }
.bags { width: 76px; height: 38px; margin-left: 9px; }
.apps { display: flex; }
.tv { width: 50px; display: grid; place-items: center; padding-right: 2px; }
.tv svg { width: 17px; height: 17px; }
.app { width: 49px; display: grid; place-items: center; position: relative; }
.app svg { width: 24px; height: 24px; }
.app.on::after { content: ""; position: absolute; left: 5px; right: 4px; bottom: 0; height: 2px; background: #76b9ed; }
.app.dim::after { background: linear-gradient(90deg, #76b9ed 82%, #4c7ba3 82%); }
.app.cur { background: #54494d; }
.app.cur::after { left: 0; right: 0; }
.tray { margin-left: auto; display: flex; align-items: center; font-size: 13.500px; }
.wx { width: 25px; height: 22px; margin-right: 7px; }
.tri { width: 70px; height: 24px; margin-left: 21px; }
.clock { width: 70px; display: flex; flex-direction: column; align-items: center; font-size: 12px; line-height: 18px; }
.note { width: 30px; height: 30px; margin-left: 9px; margin-right: 14px; }
```

FILE: fit.js
```js
// Tracks each measured run of text so that it fills its set width.
document.querySelectorAll('[data-w]').forEach(function (el) {
  var n = el.textContent.length;
  var w = el.getBoundingClientRect().width;
  el.style.letterSpacing = ((parseFloat(el.dataset.w) - w) / n).toFixed(3) + 'px';
});
```
